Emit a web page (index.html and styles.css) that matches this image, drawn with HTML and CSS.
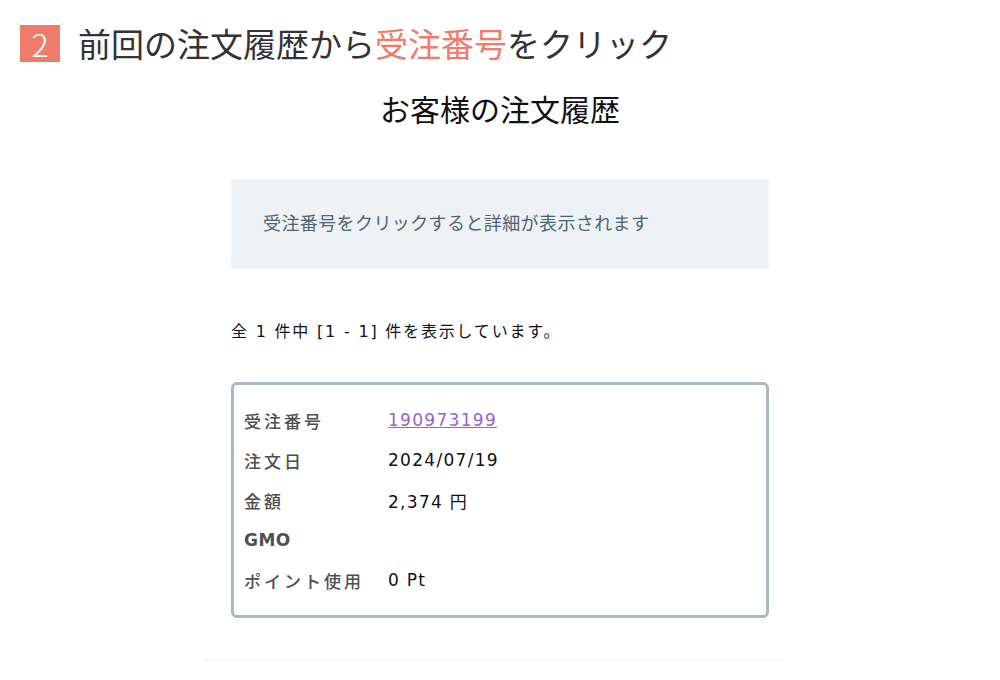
FILE: index.html
```html
<!DOCTYPE html>
<html lang="ja">

<head>
    <meta charset="UTF-8">
    <meta name="viewport" content="width=device-width, initial-scale=1.0">
    <title>注文履歴</title>
    <link rel="stylesheet" href="styles.css">
</head>

<body>
    <header class="step">
        <span class="step-num">2</span>
        <h1 class="step-title">前回の注文履歴から<span class="accent">受注番号</span>をクリック</h1>
    </header>

    <main class="history">
        <h2 class="history-title">お客様の注文履歴</h2>

        <div class="notice">受注番号をクリックすると詳細が表示されます</div>

        <p class="count">全 1 件中 [1 - 1] 件を表示しています。</p>

        <div class="order-card">
            <div class="order-row">
                <span class="order-label">受注番号</span>
                <a href="#" class="order-link">190973199</a>
            </div>
            <div class="order-row">
                <span class="order-label">注文日</span>
                <span class="order-value">2024/07/19</span>
            </div>
            <div class="order-row">
                <span class="order-label">金額</span>
                <span class="order-value">2,374 円</span>
            </div>
            <div class="order-row">
                <span class="order-label order-gmo">GMO</span>
            </div>
            <div class="order-row">
                <span class="order-label">ポイント使用</span>
                <span class="order-value">0 Pt</span>
            </div>
        </div>

        <div class="rule"></div>
    </main>
</body>

</html>
```

FILE: styles.css
```css
* {
    margin: 0;
    padding: 0;
    box-sizing: border-box;
}

body {
    background-color: #ffffff;
    font-family: "Noto Sans CJK JP", sans-serif;
    color: #222;
}

.step {
    display: flex;
    align-items: center;
    gap: 18px;
    padding: 24px 0 0 20px;
    height: 62px;
}

.step-num {
    display: flex;
    align-items: center;
    justify-content: center;
    width: 40px;
    height: 37px;
    background-color: #ef7b6b;
    color: #fff;
    font-size: 32px;
    font-weight: 300;
    font-family: "Noto Sans CJK JP", sans-serif;
}

.step-title {
    font-size: 33px;
    font-weight: 400;
    color: #333;
}

.accent {
    color: #ef7b6b;
}

.history-title {
    font-size: 30px;
    font-weight: 400;
    text-align: center;
    color: #111;
    margin-top: 24px;
    height: 54px;
}

.history {
    width: 538px;
    margin: 0 auto;
}

.notice {
    margin-top: 39px;
    height: 90px;
    background-color: #eff2f5;
    color: #4d6470;
    font-size: 18px;
    letter-spacing: 0.4px;
    padding: 30px 0 0 32px;
}

.count {
    margin-top: 49px;
    font-family: "DejaVu Sans", "Noto Sans CJK JP", sans-serif;
    font-size: 16px;
    letter-spacing: 1.8px;
    color: #111;
}

.order-card {
    margin-top: 40px;
    height: 236px;
    border: 3px solid #a9b8c2;
    border-radius: 6px;
    padding: 15px 10px 0 10px;
}

.order-row {
    display: flex;
    align-items: center;
    height: 40px;
    font-family: "DejaVu Sans", "Noto Sans CJK JP", sans-serif;
    font-size: 17px;
}

.order-label {
    width: 144px;
    color: #4f4f4f;
    font-family: "Noto Sans CJK JP", sans-serif;
    font-weight: 500;
    letter-spacing: 3px;
}

.order-gmo {
    font-family: "DejaVu Sans", sans-serif;
    font-weight: bold;
    letter-spacing: 0.5px;
}

.order-value,
.order-link {
    letter-spacing: 1.3px;
}

.order-value {
    color: #111;
}

.order-link {
    color: #9b5fd2;
}

.rule {
    margin: 41px -14px 0 -29px;
    border-top: 2px solid #f4f5f6;
}
```
